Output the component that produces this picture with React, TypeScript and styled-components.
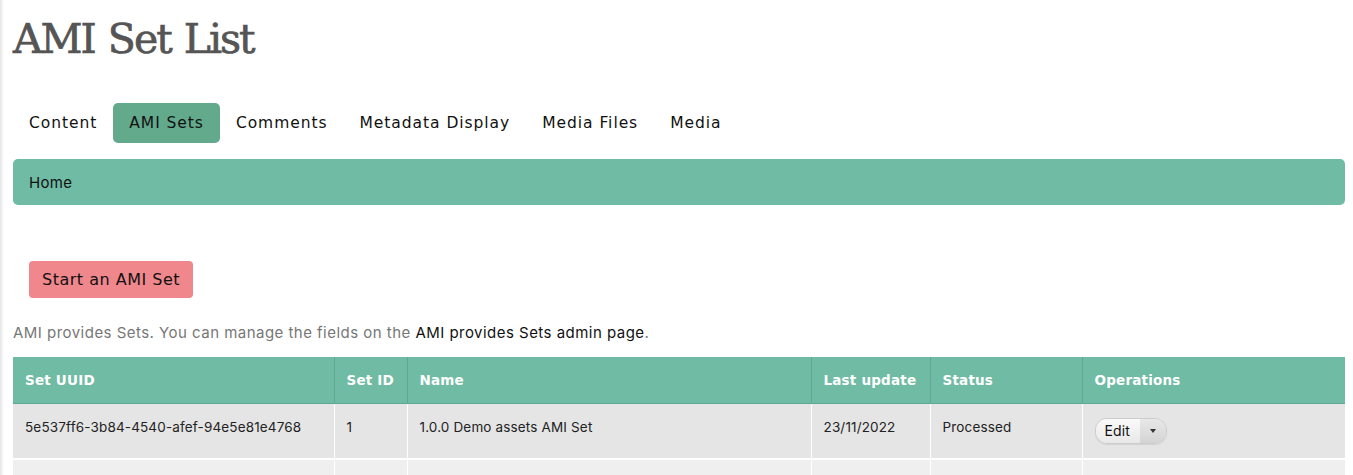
import React from "react";
import styled, { createGlobalStyle } from "styled-components";

const Global = createGlobalStyle`
  html, body { margin: 0; padding: 0; background: #fff; }
  body { font-family: "Inter", "Noto Sans", sans-serif; }
`;

const Page = styled.div`
  height: 475px;
  overflow: hidden;
  padding: 0 8px 0 13px;
  box-sizing: border-box;
  background: linear-gradient(to right, #e4e4e4 0, #f3f3f3 2px, #fff 4px);
`;

const Title = styled.h1`
  margin: 0;
  padding-top: 14px;
  height: 64px;
  box-sizing: border-box;
  font-family: "DejaVu Serif", serif;
  font-weight: normal;
  font-size: 41px;
  line-height: 50px;
  color: #555;
  letter-spacing: -2px;
  word-spacing: 2px;
  -webkit-text-stroke: 0.7px #555;
`;

const Tabs = styled.nav`
  display: flex;
  margin-top: 39px;
  height: 40px;
`;

const Tab = styled.a<{ $active?: boolean }>`
  display: flex;
  align-items: center;
  padding: 0 16px;
  border-radius: 5px;
  font-family: "DejaVu Sans", sans-serif;
  font-size: 15.5px;
  letter-spacing: 0.95px;
  color: #111;
  background: ${(p) => (p.$active ? "#63a98c" : "transparent")};
`;

const Breadcrumb = styled.div`
  margin-top: 16px;
  height: 46px;
  background: #6fbba3;
  border-radius: 5px;
  display: flex;
  align-items: center;
  padding: 0 16px;
  font-size: 15px;
  letter-spacing: 0.3px;
  color: #111;
`;

const Actions = styled.div`
  padding: 56px 16px 0;
`;

const PrimaryButton = styled.button`
  height: 37px;
  padding: 0 13px;
  border: none;
  border-radius: 4px;
  background: #f0878c;
  color: #111;
  font-family: "DejaVu Sans", sans-serif;
  font-size: 16px;
  letter-spacing: 0.5px;
`;

const Description = styled.p`
  margin: 24px 0 0;
  height: 22px;
  font-size: 15px;
  letter-spacing: 0.47px;
  color: #777;
  line-height: 22px;
  a { color: #111; text-decoration: none; }
`;

const Table = styled.table`
  margin-top: 13px;
  width: 1332px;
  border-collapse: collapse;
  table-layout: fixed;
`;

const Th = styled.th<{ $w: number }>`
  width: ${(p) => p.$w}px;
  box-sizing: border-box;
  height: 46px;
  padding: 0 12px;
  text-align: left;
  white-space: nowrap;
  background: #6fbba3;
  color: #fff;
  font-family: "DejaVu Sans", sans-serif;
  font-weight: bold;
  font-size: 13.5px;
  letter-spacing: 0.2px;
  border-left: 1px solid #5ea88f;
  border-bottom: 1px solid #5ea88f;
  &:first-child { border-left: none; }
`;

const Tr = styled.tr<{ $alt?: boolean }>`
  background: ${(p) => (p.$alt ? "#efefef" : "#e5e5e5")};
`;

const Td = styled.td`
  height: 56px;
  padding: 15px 12px 0;
  vertical-align: top;
  box-sizing: border-box;
  font-size: 13.5px;
  letter-spacing: 0.15px;
  color: #222;
  border-left: 1px solid #fff;
  border-bottom: 2px solid #fff;
  &:first-child { border-left: none; }
`;

const SplitButton = styled.div`
  display: inline-flex;
  margin-top: -1px;
  height: 24px;
  border-radius: 12px;
  border: 1px solid #ccc;
  overflow: hidden;
  box-shadow: 0 1px 1px rgba(0,0,0,0.08);
`;

const SplitMain = styled.span`
  display: flex;
  align-items: center;
  padding: 0 10px 0 9px;
  font-size: 14px;
  color: #111;
  background: linear-gradient(#fafafa, #e8e8e8);
`;

const SplitToggle = styled.span`
  display: flex;
  align-items: center;
  justify-content: center;
  width: 26px;
  background: linear-gradient(#e8e8e8, #d4d4d4);
  &::after {
    content: "";
    border-left: 3.5px solid transparent;
    border-right: 3.5px solid transparent;
    border-top: 4px solid #333;
  }
`;

const cols = [
  { label: "Set UUID", w: 321 },
  { label: "Set ID", w: 73 },
  { label: "Name", w: 404 },
  { label: "Last update", w: 119 },
  { label: "Status", w: 152 },
  { label: "Operations", w: 263 },
];

export default function App() {
  return (
    <>
      <Global />
      <Page>
        <Title>AMI Set List</Title>
        <Tabs>
          <Tab>Content</Tab>
          <Tab $active>AMI Sets</Tab>
          <Tab>Comments</Tab>
          <Tab>Metadata Display</Tab>
          <Tab>Media Files</Tab>
          <Tab>Media</Tab>
        </Tabs>
        <Breadcrumb>Home</Breadcrumb>
        <Actions>
          <PrimaryButton>Start an AMI Set</PrimaryButton>
        </Actions>
        <Description>
          AMI provides Sets. You can manage the fields on the <a href="#">AMI provides Sets admin page</a>.
        </Description>
        <Table>
          <thead>
            <tr>
              {cols.map((c) => (
                <Th key={c.label} $w={c.w}>{c.label}</Th>
              ))}
            </tr>
          </thead>
          <tbody>
            <Tr>
              <Td>5e537ff6-3b84-4540-afef-94e5e81e4768</Td>
              <Td>1</Td>
              <Td>1.0.0 Demo assets AMI Set</Td>
              <Td>23/11/2022</Td>
              <Td>Processed</Td>
              <Td>
                <SplitButton>
                  <SplitMain>Edit</SplitMain>
                  <SplitToggle />
                </SplitButton>
              </Td>
            </Tr>
            <Tr $alt>
              <Td />
              <Td />
              <Td />
              <Td />
              <Td />
              <Td />
            </Tr>
          </tbody>
        </Table>
      </Page>
    </>
  );
}
